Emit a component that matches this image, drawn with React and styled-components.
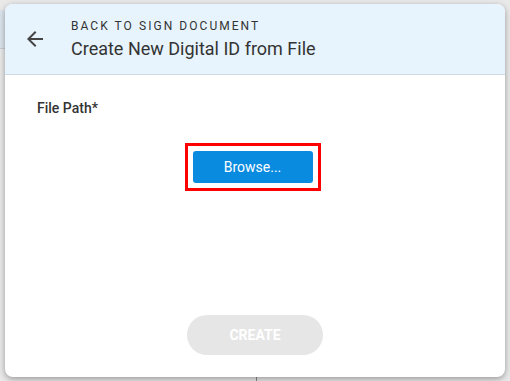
import styled, { createGlobalStyle } from "styled-components";

const Global = createGlobalStyle`
  html, body {
    margin: 0;
    padding: 0;
    background: #ececec;
    font-family: Roboto, "Liberation Sans", sans-serif;
  }
`;

const Page = styled.div`
  position: relative;
  width: 510px;
  height: 381px;
  overflow: hidden;
  background: #e9e9e9;
`;

const BackTab = styled.div`
  position: absolute;
  left: 0;
  top: 10px;
  width: 5px;
  height: 38px;
  background: #dbe3ec;
  border-bottom: 1px solid #c9ced3;
`;

const Divider = styled.div`
  position: absolute;
  left: 256px;
  top: 370px;
  width: 1px;
  height: 11px;
  background: #888;
`;

const Overlay = styled.div`
  position: relative;
  display: flex;
  padding: 4px 5px;
`;

const Dialog = styled.div`
  width: 500px;
  height: 373px;
  background: #fff;
  border-radius: 8px;
  box-shadow: 0 2px 6px rgba(0, 0, 0, 0.35);
  display: flex;
  flex-direction: column;
  overflow: hidden;
`;

const Header = styled.div`
  height: 70px;
  flex: none;
  display: flex;
  align-items: center;
  background: #e7f3fd;
  border-bottom: 1px solid #d1dbe3;
`;

const BackButton = styled.button`
  width: 24px;
  height: 24px;
  margin: 0 24px 0 18px;
  padding: 0;
  border: none;
  background: none;
  color: #444;
  display: flex;
`;

const Titles = styled.div`
  display: flex;
  flex-direction: column;
  gap: 4px;
  margin-top: -1px;
`;

const Eyebrow = styled.div`
  font-size: 12px;
  letter-spacing: 2.05px;
  color: #333;
  line-height: 16px;
`;

const Title = styled.div`
  font-size: 18px;
  color: #333;
  line-height: 22px;
`;

const Body = styled.div`
  flex: 1;
  display: flex;
  flex-direction: column;
  padding: 24px 32px 22px;
`;

const Label = styled.div`
  font-size: 14px;
  font-weight: 500;
  color: #333;
  line-height: 18px;
`;

const BrowseFrame = styled.div`
  align-self: center;
  margin: 26px 0 0 -5px;
  border: 3px solid #f00;
  padding: 5px;
  display: flex;
`;

const BrowseButton = styled.button`
  width: 120px;
  height: 32px;
  border: none;
  border-radius: 3px;
  background: #098be0;
  color: #fff;
  font-family: Roboto, "Liberation Sans", sans-serif;
  font-size: 14px;
`;

const Footer = styled.div`
  margin-top: auto;
  display: flex;
  justify-content: center;
`;

const CreateButton = styled.button`
  width: 136px;
  height: 40px;
  border: none;
  border-radius: 20px;
  background: #e6e6e6;
  color: #fff;
  font-family: Roboto, "Liberation Sans", sans-serif;
  font-size: 14px;
  font-weight: 700;
`;

export default function App() {
  return (
    <Page>
      <Global />
      <BackTab />
      <Divider />
      <Overlay>
        <Dialog>
          <Header>
            <BackButton aria-label="Back">
              <svg width="24" height="24" viewBox="0 0 24 24" fill="currentColor">
                <path d="M20 11H7.83l5.59-5.59L12 4l-8 8 8 8 1.41-1.41L7.83 13H20v-2z" />
              </svg>
            </BackButton>
            <Titles>
              <Eyebrow>BACK TO SIGN DOCUMENT</Eyebrow>
              <Title>Create New Digital ID from File</Title>
            </Titles>
          </Header>
          <Body>
            <Label>File Path*</Label>
            <BrowseFrame>
              <BrowseButton>Browse...</BrowseButton>
            </BrowseFrame>
            <Footer>
              <CreateButton disabled>CREATE</CreateButton>
            </Footer>
          </Body>
        </Dialog>
      </Overlay>
    </Page>
  );
}
